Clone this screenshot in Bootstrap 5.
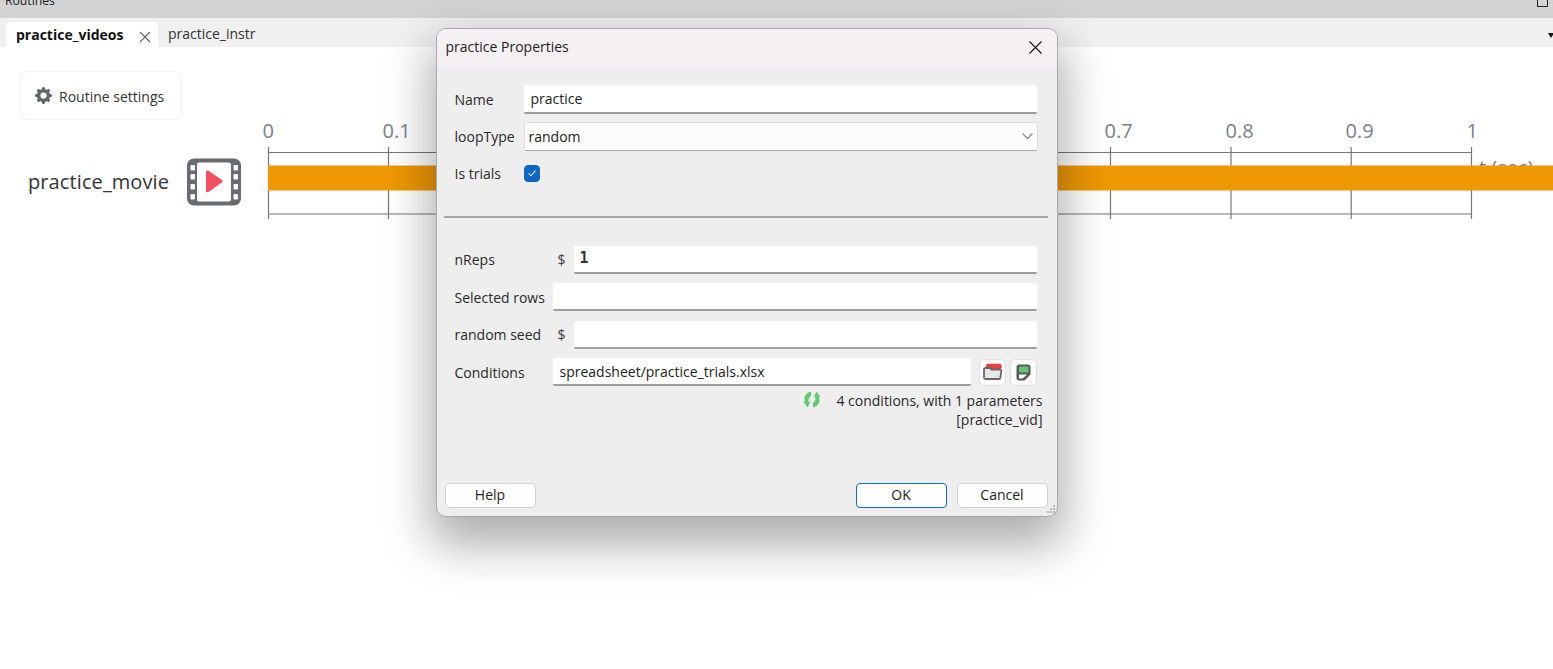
<!DOCTYPE html>
<html lang="en">
<head>
<meta charset="utf-8">
<title>practice Properties</title>
<link href="https://cdn.jsdelivr.net/npm/bootstrap@5.3.0/dist/css/bootstrap.min.css" rel="stylesheet">
<style>
html,body{height:100%;overflow:hidden;background:#fff}
body{font-family:"Open Sans","Noto Sans",sans-serif;font-size:14px;color:#222}
.app-root{position:relative;width:1553px;height:669px;overflow:hidden}
.top-strip{height:18px;background:#d3d3d3;overflow:hidden;padding-left:5px}
.top-strip span{display:block;margin-top:-8px;font-size:12.2px;line-height:18px}
.max-box{width:11px;height:9px;border:1.5px solid #222;margin:-2px 5px 0 0}
.tab-strip{height:29px;background:#f0f0f0;padding-left:6px}
.tab-on{width:152px;height:25px;margin-top:4px;background:#fff;border-radius:4px 4px 0 0;padding-left:10px;font-weight:700;color:#111;line-height:26px}
.tab-off{padding-left:10px;line-height:32px;color:#333}
.tab-x{margin:9px 0 0 16px}
.tab-menu{width:0;height:0;border-left:3px solid transparent;border-right:3px solid transparent;border-top:5px solid #111;margin:15px -1px 0 auto}
.routine-btn{width:163px;height:49px;margin:24px 0 0 19px;border:1px solid #f1f1f1;border-radius:8px;background:#fff;color:#333;padding:0 0 0 15px;font-size:14px;gap:7px}
.routine-btn span{padding-top:2px}
.flow-row{height:100px;padding-left:28px}
.flow-name{width:159px;margin-top:47px;font-size:20px;line-height:30px;color:#333;letter-spacing:.1px}
.flow-icon{margin:38px 20px 0 0;flex:none}
.flow-chart{flex:none;font-family:"Open Sans","Noto Sans",sans-serif}
.dlg{position:absolute;left:435.500px;top:27.500px;width:622px;height:489px;background:#eee;border:1px solid #a9a9a9;border-radius:10px;box-shadow:0 22px 48px 6px rgba(0,0,0,.33);overflow:hidden}
.dlg-title{height:38px;background:#f5f0f3;padding:0 15px 2px 9px;font-size:14px;color:#222}
.dlg-x{border:0;background:none;padding:2px 0 0;line-height:0}
.sec-a{padding:18px 20px 0 18px}
.lbl-a{width:69px;flex:none;color:#2a2a2a}
.lbl-b{width:98px;flex:none;color:#2a2a2a;white-space:nowrap;font-size:14px}
.dollar{width:21px;flex:none;padding-left:5px;color:#444}
.fld.form-control,.fld.form-select{height:29px;min-height:0;border:0;border-bottom:2px solid #9c9c9c;border-radius:2px;background-color:#fff;font-size:14px;color:#222;padding:0 7px;box-shadow:none}
.fld.form-select{border:1px solid #dcdcdc;border-bottom:1px solid #aaa;background-color:#fcfcfc;padding:0 30px 0 4px;background-position:right 4px center;background-size:11px 6px;width:514px;flex:none;background-image:url("data:image/svg+xml,%3csvg xmlns='http://www.w3.org/2000/svg' viewBox='0 0 11 6'%3e%3cpath fill='none' stroke='%23858585' stroke-width='1.200' d='M.5.500l5 5 5-5'/%3e%3c/svg%3e")}
.fld.h28.form-control{height:28px}
.mono-val.form-control{font-family:"DejaVu Sans Mono",monospace;font-weight:700;font-size:15px;color:#333;padding-left:6px;padding-bottom:1px}
.row-a{height:29px;margin-bottom:8px}
.row-b{height:28px}
.chk.form-check-input,.chk.form-check-input:checked[type=checkbox]{width:16px;height:17px;margin:0;background-color:#0f66c0;border:1px solid #0f66c0;border-radius:4px;--bs-form-check-bg-image:url("data:image/svg+xml,%3csvg xmlns='http://www.w3.org/2000/svg' viewBox='0 0 16 16'%3e%3cpath fill='none' stroke='%23d6e4f4' stroke-width='1.300' d='M4 8.500l2.800 2.700L12 5.300'/%3e%3c/svg%3e")}
.dlg-rule{margin:20px 9px 28px 7px;border:0;border-top:2px solid #a3a3a3;opacity:1;height:0}
.sec-b{padding:0 20px 0 18px;gap:9.67px}
.icon-btn{width:27px;height:27px;flex:none;background:#fbfbfb;border:1px solid #dfdfdf;border-radius:5px;padding:0;line-height:0}
.msg-wrap{padding:5px 14px 0 0;gap:15px;line-height:19px;color:#2a2a2a}
.msg-ico{margin-top:0;flex:none}
.dlg-foot{margin-top:auto;padding:0 9px 8px 8px}
.foot-right{column-gap:10px}
.win-btn.btn{width:91px;height:25px;padding:0;background:#fdfdfd;border:1px solid #d2d2d2;border-radius:4px;font-size:14px;line-height:22px;color:#222}
.win-btn.btn-ok{border:1.5px solid #0f70c4}
.grip{position:absolute;right:1px;bottom:1px}
</style>
</head>
<body>
<div class="app-root">
  <div class="top-strip d-flex justify-content-between">
    <span>Routines</span>
    <div class="max-box"></div>
  </div>
  <div class="tab-strip d-flex">
    <div class="tab-on d-flex">
      practice_videos
      <svg class="tab-x" width="12" height="12" viewBox="0 0 12 12"><path d="M1 1l10 10M11 1L1 11" stroke="#666" stroke-width="1.2" fill="none"/></svg>
    </div>
    <div class="tab-off">practice_instr</div>
    <div class="tab-menu"></div>
  </div>
  <button class="routine-btn d-flex align-items-center" type="button">
    <svg width="17" height="17" viewBox="0 0 16 16"><path fill="#636568" d="M9.405 1.05c-.413-1.4-2.397-1.4-2.81 0l-.1.34a1.464 1.464 0 0 1-2.105.872l-.31-.17c-1.283-.698-2.686.705-1.987 1.987l.169.311c.446.82.023 1.841-.872 2.105l-.34.1c-1.4.413-1.4 2.397 0 2.81l.34.1a1.464 1.464 0 0 1 .872 2.105l-.17.31c-.698 1.283.705 2.686 1.987 1.987l.311-.169a1.464 1.464 0 0 1 2.105.872l.1.34c.413 1.4 2.397 1.4 2.81 0l.1-.34a1.464 1.464 0 0 1 2.105-.872l.31.17c1.283.698 2.686-.705 1.987-1.987l-.169-.311a1.464 1.464 0 0 1 .872-2.105l.34-.1c1.4-.413 1.4-2.397 0-2.81l-.34-.1a1.464 1.464 0 0 1-.872-2.105l.17-.31c.698-1.283-.705-2.686-1.987-1.987l-.311.169a1.464 1.464 0 0 1-2.105-.872l-.1-.34zM8 10.93a2.929 2.929 0 1 1 0-5.86 2.929 2.929 0 0 1 0 5.858z"/></svg>
    <span>Routine settings</span>
  </button>
  <div class="flow-row d-flex">
    <div class="flow-name">practice_movie</div>
    <svg class="flow-icon" width="55" height="48" viewBox="0 0 55 48">
      <rect x="0" y="0.5" width="54" height="47" rx="7" fill="#6a6b70"/>
      <rect x="10" y="4.5" width="34" height="39" rx="2" fill="#fff"/>
      <g fill="#fff">
        <rect x="3.5" y="7" width="4.5" height="5.5" rx="1"/><rect x="3.5" y="16" width="4.5" height="5.5" rx="1"/><rect x="3.5" y="26" width="4.5" height="5.5" rx="1"/><rect x="3.5" y="36" width="4.5" height="5.5" rx="1"/>
        <rect x="46.500" y="7" width="4.500" height="5.5" rx="1"/><rect x="46.500" y="16" width="4.500" height="5.5" rx="1"/><rect x="46.500" y="26" width="4.500" height="5.5" rx="1"/><rect x="46.500" y="36" width="4.500" height="5.5" rx="1"/>
      </g>
      <path d="M19 14c0-1.500 1.200-2 2.400-1.300l13 8.800c1.300.9 1.300 2.400 0 3.300l-13 9.200c-1.200.8-2.400.2-2.400-1.300z" fill="#f4505f"/>
    </svg>
    <svg class="flow-chart" width="1291" height="100" viewBox="0 0 1291 100">
      <g stroke="#76777c" stroke-width="1.2" fill="none">
        <path d="M6.500 32.500H1210M6.500 94H1210"/>
        <path d="M6.500 27V99M126.500 27V99M246.800 27V99M367 27V99M487.500 27V99M608 27V99M728 27V99M848.500 27V99M969 27V99M1089.200 27V99M1209.500 27V99"/>
      </g>
      <g font-size="20" fill="#7b7f89">
        <text x="0.500" y="18">0</text><text x="120.500" y="18">0.1</text><text x="241" y="18">0.2</text><text x="361" y="18">0.3</text><text x="482" y="18">0.4</text><text x="602" y="18">0.5</text><text x="722" y="18">0.6</text><text x="842.500" y="18">0.7</text><text x="963.500" y="18">0.8</text><text x="1083.500" y="18">0.9</text><text x="1204.500" y="18">1</text>
        <text x="1217" y="55">t (sec)</text>
      </g>
      <rect x="6" y="45.500" width="1285" height="25" fill="#ee9803"/>
    </svg>
  </div>

  <div class="dlg d-flex flex-column" role="dialog">
    <div class="dlg-title d-flex align-items-center justify-content-between">
      <span>practice Properties</span>
      <button class="dlg-x" type="button" aria-label="Close"><svg width="13" height="13" viewBox="0 0 13 13"><path d="M.5.500l12 12M12.500.500l-12 12" stroke="#111" stroke-width="1.1" fill="none"/></svg></button>
    </div>
    <div class="sec-a">
      <div class="row-a d-flex align-items-center"><div class="lbl-a">Name</div><input class="form-control fld" value="practice"></div>
      <div class="row-a d-flex align-items-center"><div class="lbl-a">loopType</div><select class="form-select fld"><option>random</option></select></div>
      <div class="row-a d-flex align-items-center"><div class="lbl-a">Is trials</div><input class="form-check-input chk" type="checkbox" checked></div>
    </div>
    <hr class="dlg-rule">
    <div class="sec-b d-flex flex-column">
      <div class="row-b d-flex align-items-center"><div class="lbl-b">nReps</div><div class="dollar">$</div><input class="form-control fld h28 mono-val" value="1"></div>
      <div class="row-b d-flex align-items-center"><div class="lbl-b">Selected rows</div><input class="form-control fld h28"></div>
      <div class="row-b d-flex align-items-center"><div class="lbl-b">random seed</div><div class="dollar">$</div><input class="form-control fld h28"></div>
      <div class="row-b d-flex align-items-center">
        <div class="lbl-b">Conditions</div>
        <input class="form-control fld h28 me-2" value="spreadsheet/practice_trials.xlsx">
        <div class="d-flex gap-1">
          <button class="icon-btn" type="button" aria-label="Open"><svg width="21" height="18" viewBox="0 0 21 18"><path d="M4 7V2.500L5 .8h13.500l1.500 3.200-2 3z" fill="#e8413f"/><path d="M2 6.500C2 5.700 2.700 5 3.500 5H8l1.500 1.500h8.700c.8 0 1.300.6 1.200 1.300l-1.100 7.200c-.1.600-.6 1-1.200 1H3.500C2.700 16 2 15.300 2 14.500z" fill="#e6e6e6" stroke="#68696d" stroke-width="1.800"/></svg></button>
          <button class="icon-btn" type="button" aria-label="Save"><svg width="15" height="17" viewBox="0 0 15 17"><path d="M3 .5h9c1.400 0 2.500 1.100 2.500 2.500v7.500L8.500 16.500H3C1.600 16.500.5 15.400.5 14V3C.5 1.600 1.600.5 3 .5z" fill="#595a5e"/><rect x="3" y="2.500" width="9.500" height="6" rx="1" fill="#63c46e"/><path d="M3 10.500h8L6.500 14.500H3z" fill="#fff"/></svg></button>
        </div>
      </div>
    </div>
    <div class="msg-wrap d-flex justify-content-end">
      <svg class="msg-ico" width="18" height="17" viewBox="0 0 18 17"><path d="M8 .5C4.500 1.500 1.500 4 1.500 7.500c0 1 .2 2 .6 2.800L.5 11 4.500 16.500 7.500 10.500l-1.900.4C5 9.500 5.500 6.500 8 5z" fill="#62c972"/><path d="M10 16.500c3.500-1 6.500-3.500 6.500-7 0-1-.2-2-.6-2.800l1.600-.7L13.500.5 10.500 6.500l1.900-.4c.6 1.400.100 4.400-2.400 5.900z" fill="#62c972"/></svg>
      <div class="text-end">4 conditions, with 1 parameters<br>[practice_vid]</div>
    </div>
    <div class="dlg-foot d-flex justify-content-between">
      <button class="btn win-btn" type="button">Help</button>
      <div class="d-flex foot-right">
        <button class="btn win-btn btn-ok" type="button">OK</button>
        <button class="btn win-btn" type="button">Cancel</button>
      </div>
    </div>
    <svg class="grip" width="11" height="11" viewBox="0 0 11 11"><g fill="#b8b8b8"><rect x="8" y="1" width="2" height="2"/><rect x="5" y="4" width="2" height="2"/><rect x="8" y="4" width="2" height="2"/><rect x="2" y="7" width="2" height="2"/><rect x="5" y="7" width="2" height="2"/><rect x="8" y="7" width="2" height="2"/></g></svg>
  </div>
</div>
<script src="https://cdn.jsdelivr.net/npm/bootstrap@5.3.0/dist/js/bootstrap.bundle.min.js"></script>
</body>
</html>
